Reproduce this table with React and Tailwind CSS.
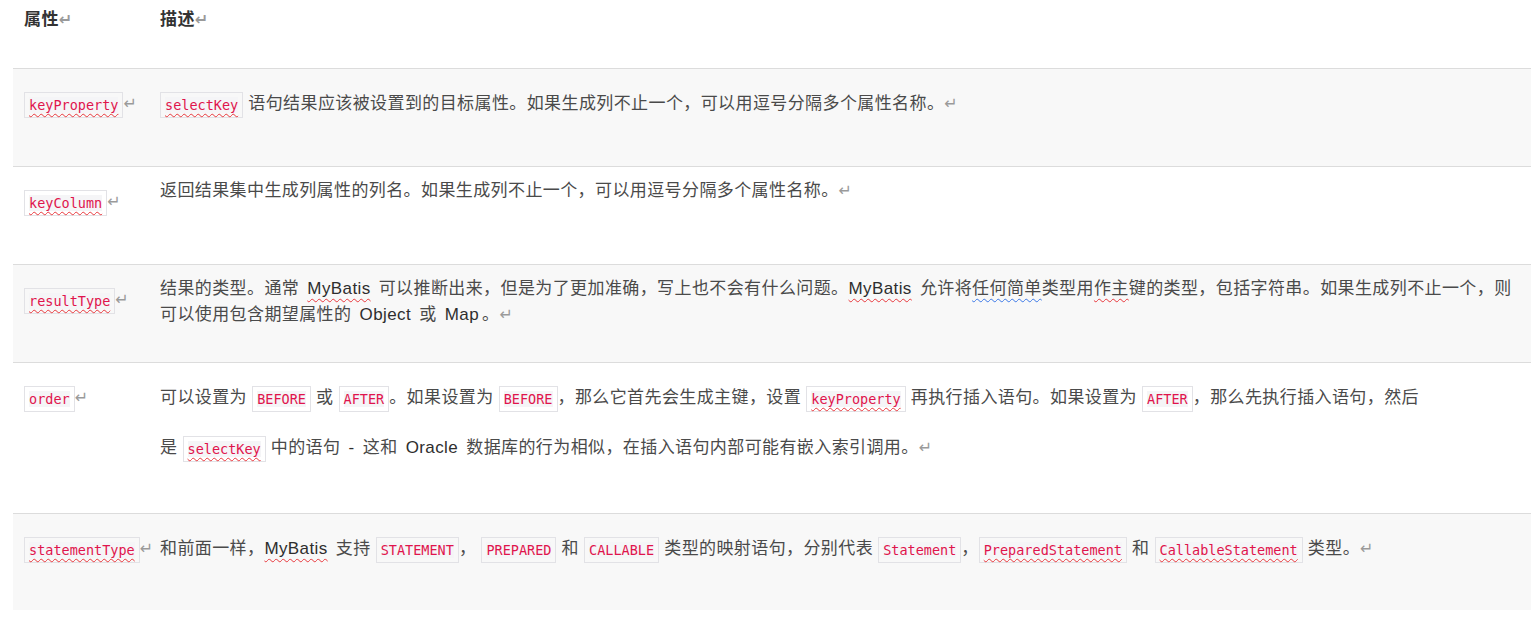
import React from "react";

const Ret = () => (
  <span className="text-[#9a9a9a] text-[16px] font-['DejaVu_Sans',sans-serif] tracking-normal">↵</span>
);

const C = ({ children, sq }) => (
  <span className="inline-block align-middle my-[12px] border border-[#e2e2e6] px-[4px] py-[2px] leading-[19px] tracking-normal">
    <span
      className={
        sq
          ? "bg-[#f5f5f7] text-[#e0144c] text-[13.5px] font-['DejaVu_Sans_Mono',monospace] underline decoration-wavy decoration-[#e8383d] decoration-1 underline-offset-[3px]"
          : "bg-[#f5f5f7] text-[#e0144c] text-[13.5px] font-['DejaVu_Sans_Mono',monospace]"
      }
    >
      {children}
    </span>
  </span>
);

const L = ({ children, sq, nl }) => (
  <span
    className={
      sq
        ? nl
          ? "mr-[3px] text-[#2e2e2e] underline decoration-wavy decoration-[#e8383d] decoration-1 underline-offset-[4px]"
          : "mx-[3px] text-[#2e2e2e] underline decoration-wavy decoration-[#e8383d] decoration-1 underline-offset-[4px]"
        : "mx-[3px] text-[#2e2e2e]"
    }
  >
    {children}
  </span>
);

const Row = ({ gray, h, a, children }) => (
  <div className={`flex border-t border-[#dcdcdc] ${gray ? "bg-[#f8f8f8]" : "bg-white"} ${h}`}>
    <div className="w-[136px] shrink-0 pl-[11px] pt-[11px] leading-[26px] whitespace-nowrap">
      {a}
    </div>
    <div className="flex-1 pl-[11px] pt-[11px] leading-[26px] whitespace-nowrap">{children}</div>
  </div>
);

export default function App() {
  return (
    <div className="w-[1531px] h-[617px] bg-white overflow-hidden font-['Liberation_Sans','Noto_Sans_CJK_SC',sans-serif] text-[17px] tracking-[0.4px] text-[#4a4a4a]">
      <div className="ml-[13px]">
        <div className="flex h-[68px] pt-[7px] leading-[26px] font-bold text-[#333]">
          <div className="w-[136px] shrink-0 pl-[11px]">
            属性<Ret />
          </div>
          <div className="flex-1 pl-[11px]">
            描述<Ret />
          </div>
        </div>

        <Row gray h="h-[98px]" a={<><C sq>keyProperty</C><Ret /></>}>
          <C sq>selectKey</C> 语句结果应该被设置到的目标属性。如果生成列不止一个，可以用逗号分隔多个属性名称。<Ret />
        </Row>

        <Row h="h-[98px]" a={<><C sq>keyColumn</C><Ret /></>}>
          返回结果集中生成列属性的列名。如果生成列不止一个，可以用逗号分隔多个属性名称。<Ret />
        </Row>

        <Row gray h="h-[98px]" a={<><C sq>resultType</C><Ret /></>}>
          结果的类型。通常 <L sq>MyBatis</L> 可以推断出来，但是为了更加准确，写上也不会有什么问题。<L sq nl>MyBatis</L> 允许将
          <span className="underline decoration-wavy decoration-[#3b78e7] decoration-1 underline-offset-[4px]">任何简单</span>
          类型用
          <span className="underline decoration-wavy decoration-[#e8383d] decoration-1 underline-offset-[4px]">作主</span>
          键的类型，包括字符串。如果生成列不止一个，则
          <br />
          可以使用包含期望属性的 <L>Object</L> 或 <L>Map</L>。<Ret />
        </Row>

        <Row h="h-[151px]" a={<><C>order</C><Ret /></>}>
          可以设置为 <C>BEFORE</C> 或 <C>AFTER</C>。如果设置为 <C>BEFORE</C>，那么它首先会生成主键，设置 <C sq>keyProperty</C> 再执行插入语句。如果设置为 <C>AFTER</C>，那么先执行插入语句，然后
          <br />
          是 <C sq>selectKey</C> 中的语句 <L>-</L> 这和 <L>Oracle</L> 数据库的行为相似，在插入语句内部可能有嵌入索引调用。<Ret />
        </Row>

        <Row gray h="h-[97px]" a={<><C sq>statementType</C><Ret /></>}>
          和前面一样，<L sq nl>MyBatis</L> 支持 <C>STATEMENT</C>， <C>PREPARED</C> 和 <C>CALLABLE</C> 类型的映射语句，分别代表 <C>Statement</C>，<C sq>PreparedStatement</C> 和 <C sq>CallableStatement</C> 类型。<Ret />
        </Row>
      </div>
    </div>
  );
}
